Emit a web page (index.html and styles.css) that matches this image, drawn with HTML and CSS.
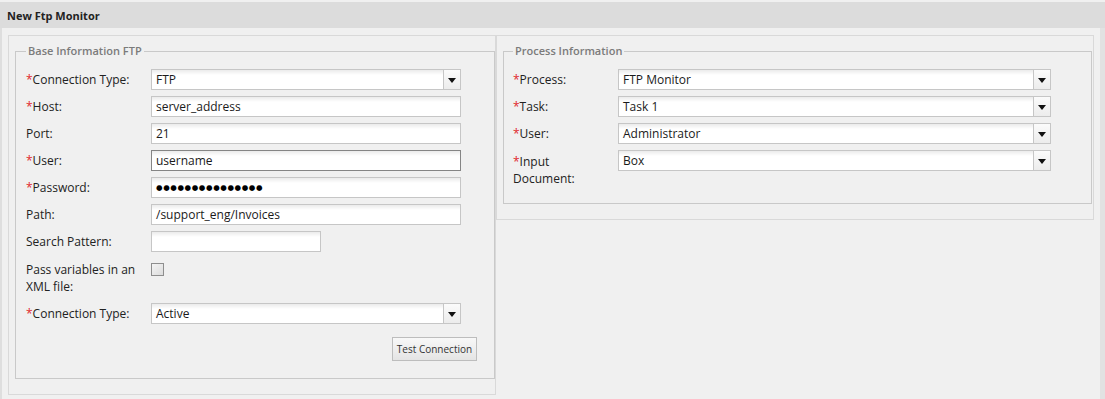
FILE: index.html
```html
<!DOCTYPE html>
<html>
<head>
<meta charset="utf-8">
<link rel="stylesheet" href="styles.css">
</head>
<body>
<div class="page">
  <div class="titlebar">New Ftp Monitor</div>
  <div class="frame">
    <div class="col col-left">
      <fieldset class="group group-left">
        <legend>Base Information FTP</legend>
        <div class="row">
          <span class="lbl"><span class="req">*</span>Connection Type:</span>
          <div class="field select w-full"><span class="val">FTP</span><span class="arrow"><i></i></span></div>
        </div>
        <div class="row">
          <span class="lbl"><span class="req">*</span>Host:</span>
          <div class="field w-full"><span class="val">server_address</span></div>
        </div>
        <div class="row">
          <span class="lbl">Port:</span>
          <div class="field w-full"><span class="val">21</span></div>
        </div>
        <div class="row">
          <span class="lbl"><span class="req">*</span>User:</span>
          <div class="field w-full focus"><span class="val">username</span></div>
        </div>
        <div class="row">
          <span class="lbl"><span class="req">*</span>Password:</span>
          <div class="field w-full"><span class="val dots">●●●●●●●●●●●●●●●</span></div>
        </div>
        <div class="row">
          <span class="lbl">Path:</span>
          <div class="field w-full"><span class="val">/support_eng/Invoices</span></div>
        </div>
        <div class="row">
          <span class="lbl">Search Pattern:</span>
          <div class="field w-short"></div>
        </div>
        <div class="row row-tall">
          <span class="lbl lbl-multi">Pass variables in an XML file:</span>
          <span class="check"></span>
        </div>
        <div class="row">
          <span class="lbl"><span class="req">*</span>Connection Type:</span>
          <div class="field select w-full"><span class="val">Active</span><span class="arrow"><i></i></span></div>
        </div>
        <div class="actions"><button class="btn">Test Connection</button></div>
      </fieldset>
    </div>
    <div class="col col-right">
      <fieldset class="group group-right">
        <legend>Process Information</legend>
        <div class="row">
          <span class="lbl lbl-r"><span class="req">*</span>Process:</span>
          <div class="field select w-right"><span class="val">FTP Monitor</span><span class="arrow"><i></i></span></div>
        </div>
        <div class="row">
          <span class="lbl lbl-r"><span class="req">*</span>Task:</span>
          <div class="field select w-right"><span class="val">Task 1</span><span class="arrow"><i></i></span></div>
        </div>
        <div class="row">
          <span class="lbl lbl-r"><span class="req">*</span>User:</span>
          <div class="field select w-right"><span class="val">Administrator</span><span class="arrow"><i></i></span></div>
        </div>
        <div class="row row-tall-r">
          <div class="lbl lbl-r lbl-multi2"><div><span class="req">*</span>Input</div><div>Document:</div></div>
          <div class="field select w-right"><span class="val">Box</span><span class="arrow"><i></i></span></div>
        </div>
      </fieldset>
    </div>
  </div>
</div>
</body>
</html>
```
FILE: styles.css
```css
* { box-sizing: border-box; }
html, body { margin: 0; padding: 0; }
body {
  background: #f0f0f0;
  font-family: "Open Sans", "DejaVu Sans", sans-serif;
  font-size: 12px;
  color: #222;
  width: 1105px;
  height: 399px;
  overflow: hidden;
}
.page { padding-top: 2px; }
.titlebar {
  height: 26px;
  line-height: 27px;
  background: #dcdcdc;
  padding-left: 7px;
  font-size: 11px;
  font-weight: 700;
  color: #222;
}
.frame {
  display: flex;
  align-items: flex-start;
  width: 1105px;
  height: 371px;
  border-left: 2px solid #dedede;
  border-right: 5px solid #e2e2e2;
  padding: 7px 0 0 6px;
}
.col {
  border: 1px solid #d9d9d9;
  padding-top: 8px;
}
.col-left { width: 488px; }
.col-right { width: 598px; }
.group {
  margin: 0;
  border: 1px solid #c9c9c9;
  min-width: 0;
}
.group legend {
  font-size: 11px;
  line-height: 14px;
  font-weight: 600;
  color: #7b7b7b;
  padding: 0 2px;
}
.group-left {
  width: 480px;
  margin: 0 0 15px 6px;
  padding: 11px 17px 17px 10px;
}
.group-right {
  width: 589px;
  margin: 0 0 15px 6px;
  padding: 11px 10px 16px 9px;
}
.row {
  display: flex;
  align-items: flex-start;
  height: 21px;
  margin-bottom: 6px;
}
.row-tall { height: 39px; }
.row-tall-r { height: 37px; margin-bottom: 0; }
.lbl {
  width: 125px;
  flex: none;
  line-height: 21px;
  white-space: nowrap;
}
.lbl-r { width: 105px; }
.lbl-multi {
  white-space: normal;
  line-height: 17px;
  padding-top: 3px;
  padding-right: 4px;
}
.lbl-multi2 {
  line-height: 17px;
  padding-top: 3px;
}
.req { color: #e0262b; }
.field {
  position: relative;
  display: flex;
  align-items: center;
  height: 21px;
  border: 1px solid #c6c6c6;
  background: linear-gradient(to bottom, #ebebeb 0, #ffffff 5px, #ffffff 100%);
  padding-left: 4px;
  flex: none;
}
.field.focus { border-color: #858585; }
.w-full { width: 310px; }
.w-short { width: 170px; }
.w-right { width: 433px; }
.val {
  line-height: 19px;
  color: #1a1a1a;
  white-space: nowrap;
}
.dots {
  font-family: "DejaVu Sans", sans-serif;
  font-size: 7.5px;
  letter-spacing: 0.6px;
  color: #000;
}
.select .val { flex: 1; }
.arrow {
  width: 17px;
  height: 19px;
  border-left: 1px solid #c6c6c6;
  background: linear-gradient(to bottom, #fbfbfb, #ececec);
  display: flex;
  align-items: center;
  justify-content: center;
  flex: none;
}
.arrow i {
  display: block;
  width: 0;
  height: 0;
  border-left: 4px solid transparent;
  border-right: 4px solid transparent;
  border-top: 5px solid #111;
  margin-top: 1px;
}
.check {
  width: 13px;
  height: 13px;
  margin-top: 5px;
  border: 1px solid #8e8e8e;
  background: linear-gradient(to bottom right, #f4f4f4, #dcdcdc);
  flex: none;
}
.actions {
  display: flex;
  justify-content: flex-end;
  margin-top: 13px;
}
.btn {
  height: 24px;
  width: 85px;
  padding: 0;
  border: 1px solid #bdbdbd;
  background: linear-gradient(to bottom, #f8f8f8, #e4e4e4);
  font-family: "Open Sans", "DejaVu Sans", sans-serif;
  font-size: 10px;
  color: #333;
  border-radius: 0;
}
```
